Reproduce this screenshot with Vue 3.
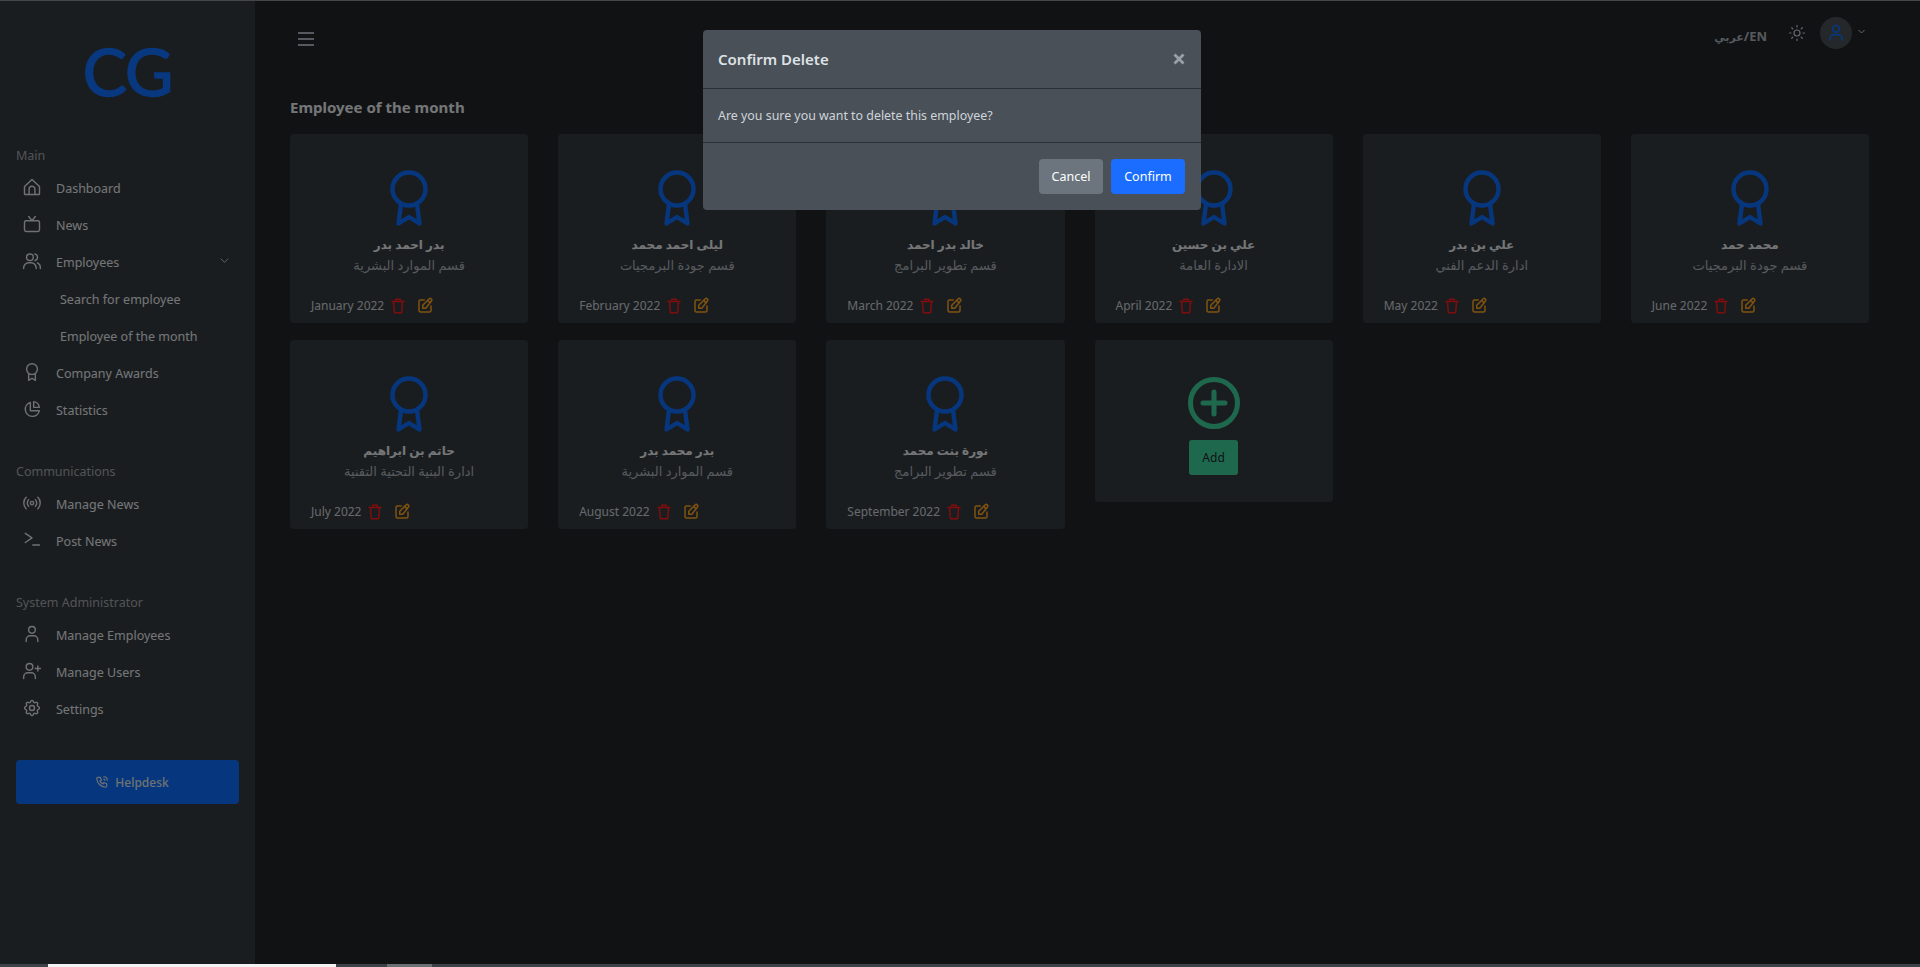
<script setup>
const icons = {
  home: ['M3 11.5 12 3l9 8.5V20a1 1 0 0 1-1 1H4a1 1 0 0 1-1-1z', 'M8.5 21v-6.5a3.5 3.5 0 0 1 7 0V21'],
  tv: ['M5 8h14a2 2 0 0 1 2 2v9a2 2 0 0 1-2 2H5a2 2 0 0 1-2-2v-9a2 2 0 0 1 2-2z', 'M8 3l4 5 4-5'],
  people: ['M9.5 3.5a4 4 0 1 0 0 8 4 4 0 0 0 0-8z', 'M2 21v-1a6 6 0 0 1 6-6h3a6 6 0 0 1 6 6v1', 'M15.5 3.6a4 4 0 0 1 0 7.8', 'M18.5 14.2a6 6 0 0 1 3.5 5.4V21'],
  award: ['M12 2a6.5 6.5 0 1 0 0 13 6.5 6.5 0 0 0 0-13z', 'M8 14.5V22l4-2.5 4 2.5v-7.5'],
  pie: ['M10 4.2A8.5 8.5 0 1 0 20.8 14H10z', 'M14 3.2A8 8 0 0 1 20.8 10H14z'],
  broadcast: ['M12 10a2 2 0 1 0 0 4 2 2 0 0 0 0-4z', 'M8 8a5.6 5.6 0 0 0 0 8', 'M16 8a5.6 5.6 0 0 1 0 8', 'M5 5a10 10 0 0 0 0 14', 'M19 5a10 10 0 0 1 0 14'],
  terminal: ['M4 4l8 5.5L4 15', 'M13 18h8'],
  person: ['M12 3a4 4 0 1 0 0 8 4 4 0 0 0 0-8z', 'M5 21v-2a5 5 0 0 1 5-5h4a5 5 0 0 1 5 5v2'],
  personPlus: ['M9 3a4 4 0 1 0 0 8 4 4 0 0 0 0-8z', 'M2 21v-2a5 5 0 0 1 5-5h4a5 5 0 0 1 5 5v2', 'M19 6v6', 'M16 9h6'],
  gear: ['M10.325 4.317c.426-1.756 2.924-1.756 3.35 0a1.724 1.724 0 0 0 2.573 1.066c1.543-.94 3.31.826 2.37 2.37a1.724 1.724 0 0 0 1.065 2.572c1.756.426 1.756 2.924 0 3.35a1.724 1.724 0 0 0-1.066 2.573c.94 1.543-.826 3.31-2.37 2.37a1.724 1.724 0 0 0-2.572 1.065c-.426 1.756-2.924 1.756-3.35 0a1.724 1.724 0 0 0-2.573-1.066c-1.543.94-3.31-.826-2.37-2.37a1.724 1.724 0 0 0-1.065-2.572c-1.756-.426-1.756-2.924 0-3.35a1.724 1.724 0 0 0 1.066-2.573c-.94-1.543.826-3.31 2.37-2.37.996.608 2.296.07 2.572-1.065z', 'M12 9a3 3 0 1 0 0 6 3 3 0 0 0 0-6z'],
  phone: ['M5 4h4l2 5-2.5 1.5a11 11 0 0 0 5 5L15 13l5 2v4a2 2 0 0 1-2 2A16 16 0 0 1 3 6a2 2 0 0 1 2-2', 'M15 7a2 2 0 0 1 2 2', 'M15 3a6 6 0 0 1 6 6'],
  trash: ['M4 6h16', 'M9 6V3h6v3', 'M6 6l1 14a1 1 0 0 0 1 1h8a1 1 0 0 0 1-1l1-14'],
  edit: ['M11 4H6a2 2 0 0 0-2 2v12a2 2 0 0 0 2 2h12a2 2 0 0 0 2-2v-6', 'M20.4 5.6a2.1 2.1 0 0 0-3-3L9 11v4h4z', 'M15.5 4.5l3 3'],
  sun: ['M12 8a4 4 0 1 0 0 8 4 4 0 0 0 0-8z', 'M12 2v2', 'M12 20v2', 'M2 12h2', 'M20 12h2', 'M5 5l1.4 1.4', 'M17.6 17.6 19 19', 'M5 19l1.4-1.4', 'M17.6 6.4 19 5'],
}

const navGroups = [
  {
    label: 'Main',
    items: [
      { text: 'Dashboard', icon: 'home' },
      { text: 'News', icon: 'tv' },
      { text: 'Employees', icon: 'people', open: true },
      { text: 'Search for employee', sub: true },
      { text: 'Employee of the month', sub: true },
      { text: 'Company Awards', icon: 'award' },
      { text: 'Statistics', icon: 'pie' },
    ],
  },
  {
    label: 'Communications',
    items: [
      { text: 'Manage News', icon: 'broadcast' },
      { text: 'Post News', icon: 'terminal' },
    ],
  },
  {
    label: 'System Administrator',
    items: [
      { text: 'Manage Employees', icon: 'person' },
      { text: 'Manage Users', icon: 'personPlus' },
      { text: 'Settings', icon: 'gear' },
    ],
  },
]

const employees = [
  { name: 'بدر احمد بدر', dept: 'قسم الموارد البشرية', month: 'January 2022' },
  { name: 'ليلى احمد محمد', dept: 'قسم جودة البرمجيات', month: 'February 2022' },
  { name: 'خالد بدر احمد', dept: 'قسم تطوير البرامج', month: 'March 2022' },
  { name: 'علي بن حسين', dept: 'الادارة العامة', month: 'April 2022' },
  { name: 'علي بن بدر', dept: 'ادارة الدعم الفني', month: 'May 2022' },
  { name: 'محمد حمد', dept: 'قسم جودة البرمجيات', month: 'June 2022' },
  { name: 'حاتم بن ابراهيم', dept: 'ادارة البنية التحتية التقنية', month: 'July 2022' },
  { name: 'بدر محمد بدر', dept: 'قسم الموارد البشرية', month: 'August 2022' },
  { name: 'نورة بنت محمد', dept: 'قسم تطوير البرامج', month: 'September 2022' },
]
</script>

<template>
  <div class="page">
    <div class="shell">
      <aside class="sidebar">
        <div class="logo">CG</div>

        <section v-for="group in navGroups" :key="group.label" class="nav-group">
          <div class="nav-label">{{ group.label }}</div>
          <a v-for="item in group.items" :key="item.text" class="nav-item" :class="{ sub: item.sub }">
            <svg v-if="item.icon" class="nav-icon" viewBox="0 0 24 24">
              <path v-for="d in icons[item.icon]" :key="d" :d="d" />
            </svg>
            <span>{{ item.text }}</span>
            <svg v-if="item.open" class="nav-chevron" viewBox="0 0 24 24"><path d="M4 8l8 8 8-8" /></svg>
          </a>
        </section>

        <button class="helpdesk">
          <svg viewBox="0 0 24 24"><path v-for="d in icons.phone" :key="d" :d="d" /></svg>
          Helpdesk
        </button>
      </aside>

      <main class="main">
        <header class="topbar">
          <div class="burger"><i></i><i></i><i></i></div>
          <div class="top-right">
            <span class="lang"><span class="lang-ar">عربي</span>/EN</span>
            <svg class="sun" viewBox="0 0 24 24"><path v-for="d in icons.sun" :key="d" :d="d" /></svg>
            <div class="avatar">
              <svg viewBox="0 0 24 24"><path v-for="d in icons.person" :key="d" :d="d" /></svg>
            </div>
            <svg class="top-chevron" viewBox="0 0 24 24"><path d="M4 8l8 8 8-8" /></svg>
          </div>
        </header>

        <h1 class="title">Employee of the month</h1>

        <div class="grid">
          <article v-for="emp in employees" :key="emp.month" class="card">
            <svg class="medal" viewBox="0 0 38 56">
              <circle cx="19" cy="19" r="16.500" />
              <path d="M11 34 8.500 53.500 19 47l10.500 6.500L27 34" />
            </svg>
            <div class="emp-name">{{ emp.name }}</div>
            <div class="emp-dept">{{ emp.dept }}</div>
            <div class="card-foot">
              <span>{{ emp.month }}</span>
              <svg class="act trash" viewBox="0 0 24 24"><path v-for="d in icons.trash" :key="d" :d="d" /></svg>
              <svg class="act edit" viewBox="0 0 24 24"><path v-for="d in icons.edit" :key="d" :d="d" /></svg>
            </div>
          </article>

          <article class="card add-card">
            <svg class="plus" viewBox="0 0 52 52">
              <circle cx="26" cy="26" r="23.5" />
              <path d="M26 15v22M15 26h22" />
            </svg>
            <button class="add-btn">Add</button>
          </article>
        </div>
      </main>
    </div>

    <div class="strip">
      <div class="strip-white"></div>
      <div class="strip-thumb"></div>
    </div>

    <div class="backdrop"></div>

    <div class="modal">
      <div class="modal-head">
        <span>Confirm Delete</span>
        <svg class="close" viewBox="0 0 12 12"><path d="M1.5 1.5l9 9M10.5 1.5l-9 9" /></svg>
      </div>
      <div class="modal-body">Are you sure you want to delete this employee?</div>
      <div class="modal-foot">
        <button class="btn cancel">Cancel</button>
        <button class="btn confirm">Confirm</button>
      </div>
    </div>
  </div>
</template>

<style>
html, body {
  margin: 0;
  height: 100%;
  overflow: hidden;
  background: #212529;
}
</style>

<style scoped>
.page {
  display: flex;
  flex-direction: column;
  height: 967px;
  border-top: 1px solid #8a8d90;
  box-sizing: border-box;
  font-family: "Noto Sans", "DejaVu Sans", sans-serif;
  color: #e9ecef;
}

.shell {
  flex: 1;
  display: flex;
  min-height: 0;
}

.sidebar {
  width: 255px;
  flex: none;
  background: #343a40;
  padding: 0 16px;
  box-sizing: border-box;
}

.logo {
  height: 145px;
  padding-top: 32px;
  box-sizing: border-box;
  text-align: center;
  font-family: Lato, sans-serif;
  font-size: 66px;
  line-height: 76px;
  font-weight: 400;
  letter-spacing: -1px;
  color: #1170ff;
  -webkit-text-stroke: 1.6px #1170ff;
}

.nav-group + .nav-group {
  margin-top: 33px;
}

.nav-label {
  height: 20px;
  line-height: 20px;
  margin-bottom: 4px;
  font-size: 12.5px;
  color: #a3a9ae;
}

.nav-item {
  display: flex;
  align-items: center;
  height: 37px;
  font-size: 12.5px;
}

.nav-item.sub {
  padding-left: 44px;
}

.nav-icon {
  width: 20px;
  height: 20px;
  margin: -4px 14px 0 6px;
  flex: none;
  fill: none;
  stroke: #dee2e6;
  stroke-width: 1.7;
  stroke-linecap: round;
  stroke-linejoin: round;
}

.nav-chevron {
  width: 11px;
  height: 11px;
  margin-left: auto;
  margin-right: 9px;
  margin-top: -4px;
  fill: none;
  stroke: #ced4da;
  stroke-width: 2;
}

.helpdesk {
  display: flex;
  align-items: center;
  justify-content: center;
  gap: 6px;
  width: 223px;
  height: 44px;
  margin-top: 32px;
  padding-left: 15px;
  border: 0;
  border-radius: 4px;
  background: #0d6efd;
  color: #dee2e6;
  font-family: inherit;
  font-size: 12px;
  font-weight: 500;
}

.helpdesk svg {
  width: 14px;
  height: 14px;
  fill: none;
  stroke: #dee2e6;
  stroke-width: 2;
  stroke-linecap: round;
  stroke-linejoin: round;
}

.main {
  flex: 1;
  min-width: 0;
  padding: 0 51px 0 35px;
}

.topbar {
  height: 74px;
  display: flex;
  align-items: center;
  justify-content: space-between;
}

.burger {
  display: flex;
  flex-direction: column;
  gap: 4px;
  width: 16px;
  margin: 2px 0 0 8px;
}

.burger i {
  height: 2px;
  background: #adb5bd;
}

.top-right {
  display: flex;
  align-items: center;
  padding: 0 1px 10px 0;
}

.lang {
  font-size: 13px;
  font-weight: 700;
  color: #adb5bd;
  margin-top: 5px;
}

.lang-ar {
  font-size: 11px;
}

.sun {
  width: 18px;
  height: 18px;
  margin: 0 14px 0 21px;
  fill: none;
  stroke: #ced4da;
  stroke-width: 1.6;
  stroke-linecap: round;
}

.avatar {
  width: 32px;
  height: 32px;
  border-radius: 50%;
  background: #495057;
  display: flex;
  align-items: center;
  justify-content: center;
}

.avatar svg {
  width: 20px;
  height: 20px;
  fill: none;
  stroke: #0d6efd;
  stroke-width: 2;
}

.top-chevron {
  width: 9px;
  height: 9px;
  margin: -4px 2px 0 5px;
  fill: none;
  stroke: #ced4da;
  stroke-width: 2.5;
}

.title {
  margin: 20px 0 15px;
  font-size: 15px;
  line-height: 24px;
  font-weight: 700;
  color: #e9ecef;
}

.grid {
  display: grid;
  grid-template-columns: repeat(6, 1fr);
  column-gap: 30px;
  row-gap: 17px;
  align-items: start;
}

.card {
  display: flex;
  flex-direction: column;
  align-items: center;
  height: 189px;
  padding-top: 36px;
  box-sizing: border-box;
  border-radius: 4px;
  background: #343a40;
}

.medal {
  width: 38px;
  height: 56px;
  fill: none;
  stroke: #0d6efd;
  stroke-width: 4.4;
  stroke-linejoin: round;
  stroke-linecap: round;
}

.emp-name {
  margin-top: 9px;
  font-size: 12px;
  line-height: 20px;
  font-weight: 700;
}

.emp-dept {
  font-size: 13px;
  line-height: 20px;
  color: #adb5bd;
}

.card-foot {
  display: flex;
  align-items: center;
  align-self: stretch;
  margin-top: 21px;
  padding-left: 21px;
  font-size: 12px;
  line-height: 20px;
  color: #ced4da;
}

.act {
  width: 18px;
  height: 18px;
  fill: none;
  stroke-width: 2;
  stroke-linecap: round;
  stroke-linejoin: round;
}

.trash {
  margin-left: 5px;
  stroke: #ff1a1a;
}

.edit {
  margin-left: 9px;
  stroke: #ffa51f;
}

.add-card {
  height: 162px;
  padding-top: 37px;
}

.plus {
  width: 52px;
  height: 52px;
  fill: none;
  stroke: #3dd29c;
  stroke-width: 5;
  stroke-linecap: round;
}

.add-btn {
  width: 49px;
  height: 35px;
  margin-top: 11px;
  border: 0;
  border-radius: 3px;
  background: #3dd29c;
  color: #212529;
  font-family: inherit;
  font-size: 12px;
}

.strip {
  position: relative;
  z-index: 3;
  height: 3px;
  flex: none;
  background: #3c4247;
}

.strip-white {
  position: absolute;
  left: 48px;
  width: 288px;
  top: 0;
  bottom: 0;
  background: #f2f2f2;
}

.strip-thumb {
  position: absolute;
  left: 387px;
  width: 45px;
  top: 0;
  bottom: 0;
  background: #6a6f74;
}

.backdrop {
  position: fixed;
  inset: 0;
  z-index: 2;
  background: rgba(0, 0, 0, 0.5);
}

.modal {
  position: fixed;
  z-index: 4;
  left: 703px;
  top: 30px;
  width: 498px;
  border-radius: 4px;
  background: #495057;
  color: #dee2e6;
}

.modal-head {
  display: flex;
  align-items: center;
  justify-content: space-between;
  height: 58px;
  padding: 0 16px 0 15px;
  border-bottom: 1px solid #2b3035;
  font-size: 15px;
  font-weight: 600;
}

.close {
  width: 12px;
  height: 12px;
  fill: none;
  stroke: #9aa0a6;
  stroke-width: 2.8;
}

.modal-body {
  height: 53px;
  padding: 0 15px;
  border-bottom: 1px solid #2b3035;
  font-size: 12.4px;
  line-height: 53px;
  color: #ced4da;
}

.modal-foot {
  display: flex;
  justify-content: flex-end;
  gap: 8px;
  height: 67px;
  padding: 16px 16px 0 0;
  box-sizing: border-box;
}

.btn {
  height: 35px;
  border: 0;
  border-radius: 4px;
  color: #fff;
  font-family: inherit;
  font-size: 12.5px;
}

.cancel {
  width: 64px;
  background: #6c757d;
}

.confirm {
  width: 74px;
  background: #1a6dff;
}
</style>
